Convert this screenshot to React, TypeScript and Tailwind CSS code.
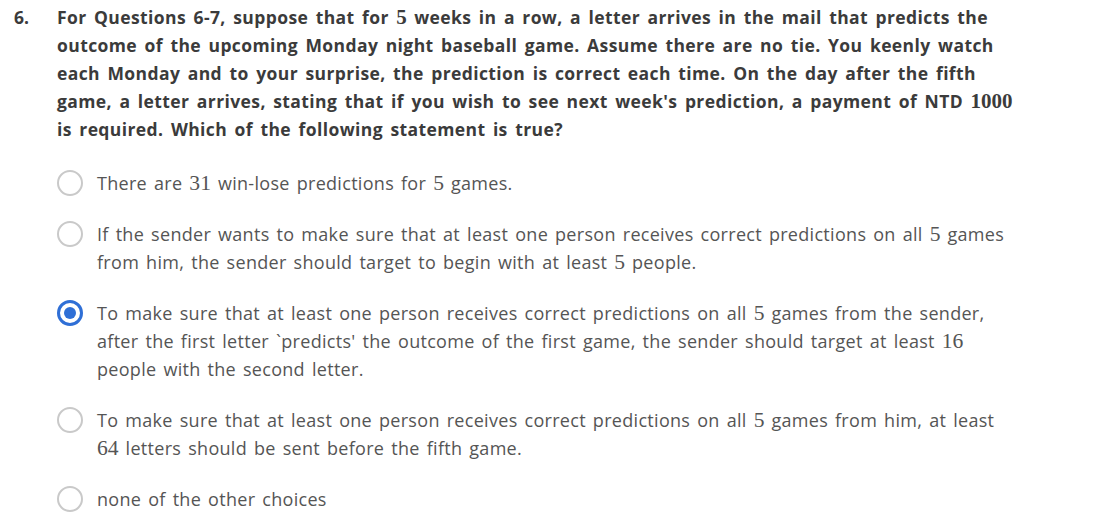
import { useState } from 'react';

const M = ({ children }: { children: React.ReactNode }) => (
  <span className="font-['Liberation_Serif',serif] text-[1.2em] leading-none tracking-normal">{children}</span>
);

const options: React.ReactNode[] = [
  <>There are <M>31</M> win-lose predictions for <M>5</M> games.</>,
  <>
    If the sender wants to make sure that at least one person receives correct predictions on all <M>5</M> games
    from him, the sender should target to begin with at least <M>5</M> people.
  </>,
  <>
    To make sure that at least one person receives correct predictions on all <M>5</M> games from the sender,
    after the first letter `predicts' the outcome of the first game, the sender should target at least <M>16</M>{' '}
    people with the second letter.
  </>,
  <>
    To make sure that at least one person receives correct predictions on all <M>5</M> games from him, at least{' '}
    <M>64</M> letters should be sent before the fifth game.
  </>,
  <>none of the other choices</>,
];

function Radio({ checked }: { checked: boolean }) {
  return checked ? (
    <span className="flex h-[26px] w-[26px] shrink-0 items-center justify-center rounded-full border-[3px] border-[#2f6fd6]">
      <span className="h-[12px] w-[12px] rounded-full bg-[#2f6fd6]" />
    </span>
  ) : (
    <span className="h-[26px] w-[26px] shrink-0 rounded-full border-[2.5px] border-[#c9c9c9]" />
  );
}

export default function App() {
  const [selected, setSelected] = useState(2);

  return (
    <div className="min-h-[520px] w-[1109px] bg-white font-['Open_Sans',sans-serif]">
      <div className="flex pl-[14px] pt-[3px]">
        <div className="w-[43px] shrink-0 text-[17.5px] font-bold leading-[28px] text-[#3b3b3b]">6.</div>
        <div className="w-[968px]">
          <p className="text-[17.5px] font-bold leading-[28px] tracking-[0.4px] text-[#3b3b3b] [word-spacing:2.5px]">
            For Questions 6-7, suppose that for <M>5</M> weeks in a row, a letter arrives in the mail that predicts the
            outcome of the upcoming Monday night baseball game. Assume there are no tie. You keenly watch each Monday
            and to your surprise, the prediction is correct each time. On the day after the fifth game, a letter
            arrives, stating that if you wish to see next week's prediction, a payment of NTD <M>1000</M> is required.
            Which of the following statement is true?
          </p>
          <div className="mt-[26px] flex flex-col gap-[23px]">
            {options.map((opt, i) => (
              <label
                key={i}
                className="flex cursor-pointer items-start gap-[14px]"
                onClick={() => setSelected(i)}
              >
                <span className="flex h-[28px] items-center">
                  <Radio checked={selected === i} />
                </span>
                <span className="w-[912px] text-[18px] leading-[28px] tracking-[0.3px] text-[#555555] [word-spacing:2px]">
                  {opt}
                </span>
              </label>
            ))}
          </div>
        </div>
      </div>
    </div>
  );
}
